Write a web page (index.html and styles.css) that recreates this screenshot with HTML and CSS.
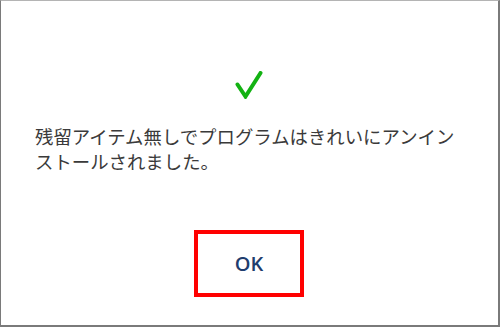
FILE: index.html
```html
<!DOCTYPE html>
<html lang="ja">
<head>
<meta charset="utf-8">
<link rel="stylesheet" href="styles.css">
</head>
<body>
<div class="dialog">
  <svg class="check" width="28" height="28" viewBox="0 0 28 28">
    <polyline points="2.5,13.5 10.5,25.5 25.5,2" fill="none" stroke="#13b213" stroke-width="4" stroke-linecap="round" stroke-linejoin="miter"/>
  </svg>
  <p class="message">残留アイテム無しでプログラムはきれいにアンインストールされました。</p>
  <button class="ok">OK</button>
</div>
</body>
</html>
```

FILE: styles.css
```css
html, body {
  margin: 0;
  padding: 0;
  background: #ffffff;
}

.dialog {
  box-sizing: border-box;
  width: 500px;
  height: 327px;
  border-top: 1px solid #b4b4b4;
  border-left: 1px solid #7a7a7a;
  border-right: 2px solid #7a7a7a;
  border-bottom: 2px solid #7a7a7a;
  display: flex;
  flex-direction: column;
  align-items: center;
  padding: 70px 0 0 0;
}

.check {
  display: block;
  margin-left: -1px;
}

.message {
  align-self: stretch;
  margin: 25px 0 0 0;
  padding: 0 35px 0 34px;
  font-family: "Noto Sans CJK JP", sans-serif;
  font-size: 18.4px;
  line-height: 25px;
  color: #3a3a3a;
}

.ok {
  margin-top: 56px;
  width: 110px;
  height: 67px;
  box-sizing: border-box;
  border: 4px solid #ff0000;
  background: #ffffff;
  font-family: "Open Sans", sans-serif;
  font-weight: 600;
  font-size: 20px;
  color: #1f3d6e;
  padding: 0;
  margin-left: -1px;
}
```
